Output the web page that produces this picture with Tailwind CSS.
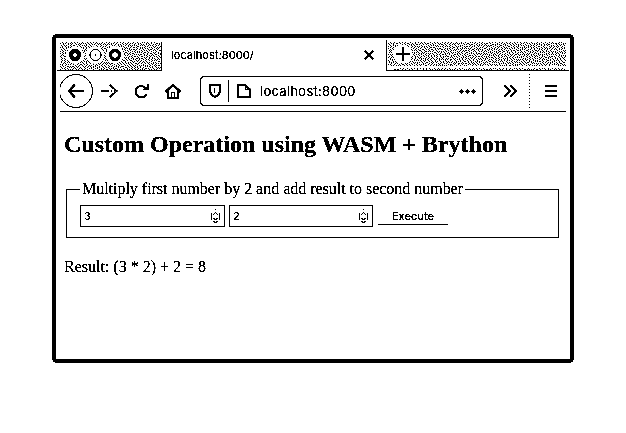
<!DOCTYPE html>
<html lang="en">
<head>
<meta charset="utf-8">
<title>localhost:8000/</title>
<script src="https://cdn.jsdelivr.net/npm/@tailwindcss/browser@4"></script>
</head>
<body class="bg-white text-black">
<div class="h-[433px] w-[626px] overflow-hidden bg-white pl-[52px] pt-[34px] brightness-75 grayscale contrast-[30]">
<main class="flex h-[329px] w-[522px] flex-col overflow-hidden rounded-[5px] border-4 border-black bg-white">
  <header class="flex h-[33px] shrink-0 font-['Inter',sans-serif]">
    <div class="ml-px h-[33px] w-[105px] border-b border-black pl-[3px] pt-1">
      <svg class="block" width="102" height="29" viewBox="0 0 102 29">
        <path data-dots="101,28,0" shape-rendering="crispEdges" stroke="#000"/>
        <g fill="#fff"><circle cx="15" cy="13" r="9"/><circle cx="35" cy="13" r="9"/><circle cx="55" cy="13" r="9"/></g>
        <g fill="none" stroke="#000"><circle cx="15" cy="13" r="4" stroke-width="4"/><circle cx="35.500" cy="13" r="5.500" stroke-width="1"/><circle cx="55" cy="13" r="4.500" stroke-width="3"/></g>
        <path d="M35 12.5h1v1h-1zM101 0h1v29h-1z"/>
      </svg>
    </div>
    <div class="flex h-[33px] w-[224px] items-center justify-between pl-[9px] pr-[12px]">
      <span class="text-[11px] leading-[14px] tracking-[0.06px]">localhost:8000/</span>
      <svg width="10" height="10" viewBox="0 0 10 10" fill="none" stroke="#000" stroke-width="1.800"><path d="M.8.8l8.400 8.400M9.200.8L.8 9.200"/></svg>
    </div>
    <div class="mt-0.5 h-[31px] w-[183px] border-b border-l border-black pl-px pt-0.5">
      <svg class="block" width="179" height="28" viewBox="0 0 179 28">
        <path data-dots="178,24,0" shape-rendering="crispEdges" stroke="#000"/>
        <path data-dots="172,2,6" shape-rendering="crispEdges" stroke="#000" transform="translate(6 26)"/>
        <rect x="5" y="3" width="19" height="18" rx="8" fill="#fff"/>
        <path shape-rendering="crispEdges" d="M14 5h2v14h-2zM8 11h14v2H8z"/>
      </svg>
    </div>
  </header>
  <nav class="mx-1 flex h-[41px] shrink-0 items-center border-b border-black font-['Inter',sans-serif]">
    <svg class="block shrink-0" width="140" height="40" viewBox="60 71 140 40" fill="none" stroke="#000" stroke-width="1.800">
      <circle cx="76" cy="91" r="16.500" stroke-width=".9"/>
      <path d="M69 91h15M75 84.500l-6.500 6.500 6.500 6.500"/>
      <path d="M101 91h8"/><path d="M111 91h1" stroke-width="1"/><path d="M110 85l2 2M110 97l2-2"/><path d="M112.500 87.500l4 3.500-4 3.500" stroke-width="1.800" stroke-dasharray="1.500 .8"/>
      <path d="M146.500 94a5.700 5.700 0 1 1-.5-5.500"/><path d="M148 84v5.500M143 89.500h5.500M147 87v2" stroke-width="1.500"/>
      <path d="M165.500 92l7.500-7.500 7.500 7.500" stroke-width="1.900"/><path d="M168 90v8h10v-8" stroke-width="2"/><path shape-rendering="crispEdges" stroke-width="1" d="M171.500 97v-4.500h3V97"/>
    </svg>
    <div class="flex h-[30px] w-[283px] shrink-0 items-center rounded-[4px] border border-black pl-2">
      <svg class="block shrink-0" width="51" height="28" viewBox="209 77 51 28" fill="none" stroke="#000">
        <path stroke-width="1.900" d="M210 85.500q3 0 5-1 2 1 5 1v4.500c0 3.500-2 5.500-5 7-3-1.500-5-3.500-5-7z"/>
        <path shape-rendering="crispEdges" d="M214.500 88v5"/>
        <path d="M228.500 80v22"/>
        <path stroke-width="1.800" d="M238 85h7l5 4.500v7.700h-12z"/><path stroke-width="1" shape-rendering="crispEdges" d="M245.500 85v4.500h4.500"/>
      </svg>
      <span class="w-[199px] text-[13px] leading-[18px] tracking-[0.28px]">localhost:8000</span>
      <svg width="17" height="5" viewBox="0 0 17 5"><circle cx="2.500" cy="2.500" r="1.900"/><circle cx="8.500" cy="2.500" r="1.900"/><circle cx="14.500" cy="2.500" r="1.900"/></svg>
    </div>
    <svg class="block shrink-0" width="83" height="40" viewBox="483 71 83 40" fill="none" stroke="#000" stroke-width="1.800">
      <path d="M504.500 85.500l5.500 5.500-5.500 5.500M510.500 85.500l5.500 5.500-5.500 5.500"/>
      <path d="M529.500 74v34" stroke-width="1" stroke-dasharray="1 2"/>
      <path stroke-width="2" d="M545 86h12M545 91h12M545 96h12"/>
    </svg>
  </nav>
  <section class="flex flex-col font-['Liberation_Serif',serif]">
    <h1 class="ml-2 mt-[18px] h-7 whitespace-nowrap text-[24px] font-bold leading-7">Custom Operation using WASM + Brython</h1>
    <fieldset class="ml-[10px] mt-[22px] h-[58px] w-[493px] border border-black pl-[13px]">
      <legend class="h-[18px] whitespace-nowrap pl-[2px] pr-[2px] text-[16px] leading-[18px] tracking-[-0.02px]">Multiply first number by 2 and add result to second number</legend>
      <div class="flex pt-[7px] font-['Inter',sans-serif] text-[11px]">
        <div class="flex h-[22px] w-[145px] items-center justify-between border border-black pl-[3px] pr-1"><span>3</span>
          <svg width="9" height="15" viewBox="0 0 9 15" fill="none" stroke="#000"><path d="M.5 4v7M8.500 4v7M4 .5h1M2 6L4.500 3.500 7 6M2 8.500L4.500 11 7 8.500M1.500 12q3 3 6 0"/></svg></div>
        <div class="ml-1 flex h-[22px] w-[144px] items-center justify-between border border-black pl-[3px] pr-1"><span>2</span>
          <svg width="9" height="15" viewBox="0 0 9 15" fill="none" stroke="#000"><path d="M.5 4v7M8.500 4v7M4 .5h1M2 6L4.500 3.500 7 6M2 8.500L4.500 11 7 8.500M1.500 12q3 3 6 0"/></svg></div>
        <button class="ml-[5px] flex h-5 w-[70px] items-center justify-center border-b border-black pt-1 text-[11px] font-medium">Execute</button>
      </div>
    </fieldset>
    <p class="ml-2 mt-[19px] text-[16px] leading-[20px]">Result: (3 * 2) + 2 = 8</p>
  </section>
</main>
</div>
<script>
  // Fill the tab strip with an error-diffused light grey.
  document.querySelectorAll('[data-dots]').forEach(function (path) {
    var size = path.dataset.dots.split(',').map(Number), w = size[0], h = size[1];
    var seed = 7 + size[2], d = '', row = new Float32Array(w + 2);
    for (var y = 0; y < h; y++) {
      var next = new Float32Array(w + 2);
      for (var x = 0; x < w; x++) {
        seed = (seed * 16807) % 2147483647;
        var v = 0.32 + row[x + 1];
        var on = v > 0.5 + (seed / 2147483647 - 0.5) * 0.35;
        var e = v - (on ? 1 : 0);
        if (on) d += 'M' + x + ' ' + (y + 0.5) + 'h1';
        row[x + 2] += e * 7 / 16;
        next[x] += e * 3 / 16;
        next[x + 1] += e * 5 / 16;
        next[x + 2] += e / 16;
      }
      row = next;
    }
    path.setAttribute('d', d);
  });
</script>
</body>
</html>
